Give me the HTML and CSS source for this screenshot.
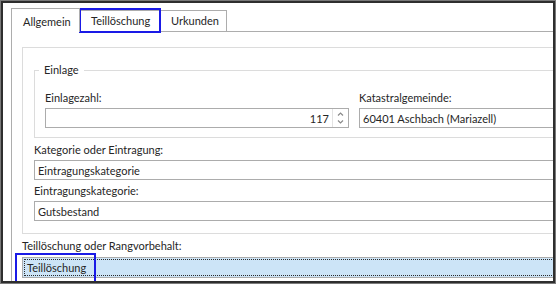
FILE: index.html
```html
<!DOCTYPE html>
<html lang="de">
<head>
<meta charset="utf-8">
<title>Teillöschung</title>
<link rel="stylesheet" href="styles.css">
</head>
<body>
<div class="frame">
  <div class="screen">
    <div class="tabs">
      <div class="tab tab-1 active">Allgemein</div>
      <div class="tab tab-2">Teillöschung</div>
      <div class="tab tab-3">Urkunden</div>
    </div>
    <div class="panel">
      <div class="inner">
        <fieldset class="group">
          <legend>Einlage</legend>
          <div class="row">
            <div class="col">
              <div class="label">Einlagezahl:</div>
              <div class="field number">
                <span class="value">117</span>
                <span class="spin">
                  <svg width="13" height="18" viewBox="0 0 13 18" aria-hidden="true">
                    <path d="M4 6.5 L6.5 4 L9 6.5" fill="none" stroke="#8a8a8a" stroke-width="1.2"/>
                    <path d="M4 11.5 L6.5 14 L9 11.5" fill="none" stroke="#8a8a8a" stroke-width="1.2"/>
                  </svg>
                </span>
              </div>
            </div>
            <div class="col">
              <div class="label">Katastralgemeinde:</div>
              <div class="field"><span class="value">60401 Aschbach (Mariazell)</span></div>
            </div>
          </div>
        </fieldset>
        <div class="label label-k">Kategorie oder Eintragung:</div>
        <div class="field wide"><span class="value">Eintragungskategorie</span></div>
        <div class="label">Eintragungskategorie:</div>
        <div class="field wide"><span class="value">Gutsbestand</span></div>
      </div>
      <div class="label label-t">Teillöschung oder Rangvorbehalt:</div>
      <div class="field wide selected"><span class="focus">Teillöschung</span></div>
    </div>
    <div class="mark mark-tab"></div>
    <div class="mark mark-field"></div>
  </div>
</div>
</body>
</html>
```

FILE: styles.css
```css
html, body {
  margin: 0;
  padding: 0;
  background: #ffffff;
}

.frame {
  width: 556px;
  height: 284px;
  box-sizing: border-box;
  border: 1px solid #7a7a7a;
}

.screen {
  position: relative;
  box-sizing: border-box;
  height: 100%;
  border: 2px solid #2e2e2e;
  overflow: hidden;
  background: #ffffff;
  font-family: "Lato", "Noto Sans", sans-serif;
  font-size: 11px;
  color: #262626;
}

.tabs {
  display: flex;
  align-items: flex-end;
  height: 23px;
  margin: 5px 0 0 8px;
}

.tab {
  box-sizing: border-box;
  height: 21px;
  border: 1px solid #adadad;
  border-bottom: none;
  background: #ffffff;
  line-height: 20px;
  padding-left: 10px;
  white-space: nowrap;
}

.tab.active {
  position: relative;
  z-index: 1;
  height: 24px;
  margin-bottom: -1px;
  line-height: 25px;
  padding-left: 11px;
}

.tab-1 { width: 69px; }
.tab-2 { width: 82px; margin-left: -1px; padding-left: 11px; }
.tab-3 { width: 67px; margin-left: -1px; }

.panel {
  width: 700px;
  margin-left: 8px;
  border-left: 1px solid #adadad;
  border-top: 1px solid #adadad;
  padding: 15px 0 0 10px;
  height: 400px;
}

.inner {
  border: 1px solid #dcdcdc;
  border-right: none;
  padding: 14px 0 12px 11px;
}

.group {
  margin: 0 0 1px 0;
  padding: 0 0 9px 10px;
  border: 1px solid #dcdcdc;
  border-right: none;
  min-width: 0;
}

.group legend {
  padding: 0 5px;
  margin-left: -6px;
  line-height: 16px;
}

.row {
  display: flex;
  gap: 10px;
  margin-top: 10px;
}

.col {
  width: 304px;
  flex: none;
}

.col + .col {
  width: 400px;
}

.label {
  line-height: 20px;
  white-space: nowrap;
}

.label-k {
  margin-top: 2px;
}

.label-t {
  margin-top: 1px;
  line-height: 22px;
}

.field {
  box-sizing: border-box;
  height: 20px;
  border: 1px solid #acacac;
  display: flex;
  align-items: center;
  padding-left: 3px;
  white-space: nowrap;
  background: #ffffff;
}

.field + .label {
  margin-top: 1px;
}

.field.number {
  justify-content: flex-end;
  padding-left: 0;
  padding-right: 1px;
}

.spin {
  display: flex;
  align-items: center;
  justify-content: center;
  width: 14px;
  height: 18px;
  margin-left: 3px;
  border-left: 1px solid #e3e3e3;
}

.field.selected {
  height: 21px;
  background: #cce4f7;
  padding: 1px;
}

.focus {
  display: flex;
  align-items: center;
  box-sizing: border-box;
  width: 100%;
  height: 17px;
  border-top: 1px dotted #2a2a2a;
  border-bottom: 1px dotted #2a2a2a;
  border-left: 1px dotted #2a2a2a;
  padding-left: 2px;
}

.mark {
  position: absolute;
  box-sizing: border-box;
  border: 2px solid #1a1ae6;
  pointer-events: none;
}

.mark-tab {
  left: 76px;
  top: 5px;
  width: 82px;
  height: 25px;
}

.mark-field {
  left: 12px;
  top: 250px;
  width: 81px;
  height: 30px;
}
```
